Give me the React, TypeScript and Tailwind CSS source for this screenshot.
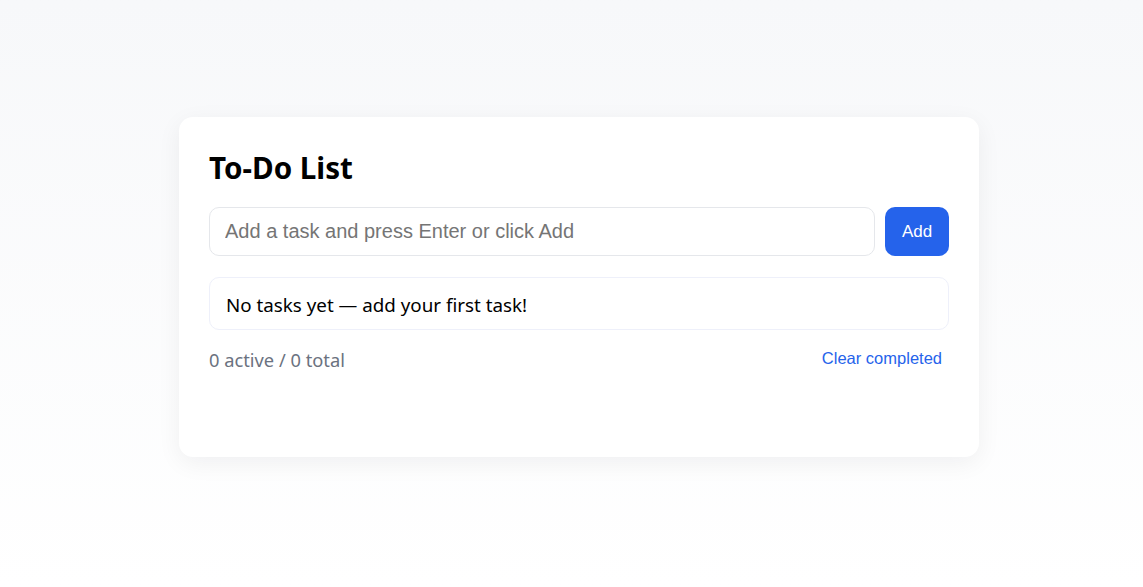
import React, { useState } from "react";

export default function App() {
  const [text, setText] = useState("");
  return (
    <div className="min-h-screen w-full bg-gradient-to-b from-[#f7f8fa] to-[#ffffff] flex justify-center pt-[117px] pl-[15px]" style={{ fontFamily: '"Noto Sans", "Open Sans", sans-serif' }}>
      <div className="w-[800px] h-[340px] bg-white rounded-[14px] shadow-[0_6px_24px_rgba(15,23,42,0.06)] px-[30px] pt-[31px]">
        <h1 className="text-[29.6px] leading-[40px] font-bold text-black">To-Do List</h1>
        <div className="flex gap-[10px] mt-[19px]">
          <input
            value={text}
            onChange={(e) => setText(e.target.value)}
            placeholder="Add a task and press Enter or click Add"
            className="flex-1 h-[49px] rounded-[10px] border border-[#e5e7eb] px-[15px] text-[20px] text-black placeholder:text-[#757575] outline-none"
            style={{ fontFamily: '"Liberation Sans", Arial, sans-serif' }}
          />
          <button
            className="w-[64px] h-[49px] rounded-[10px] bg-[#2563eb] text-white text-[17px]"
            style={{ fontFamily: '"Liberation Sans", Arial, sans-serif' }}
          >
            Add
          </button>
        </div>
        <div className="mt-[21px] h-[53px] rounded-[10px] border border-[#eef0fa] flex items-center px-[16px] text-[18.8px] text-black">
          <span className="translate-y-[2px]">No tasks yet — add your first task!</span>
        </div>
        <div className="flex items-center justify-between mt-[16px] h-[24px]">
          <span className="text-[18.3px] leading-[24px] text-[#6b7280] translate-y-[2px]">0 active / 0 total</span>
          <button
            className="text-[16.5px] text-[#2563eb] pr-[7px]"
            style={{ fontFamily: '"Liberation Sans", Arial, sans-serif' }}
          >
            Clear completed
          </button>
        </div>
      </div>
    </div>
  );
}
